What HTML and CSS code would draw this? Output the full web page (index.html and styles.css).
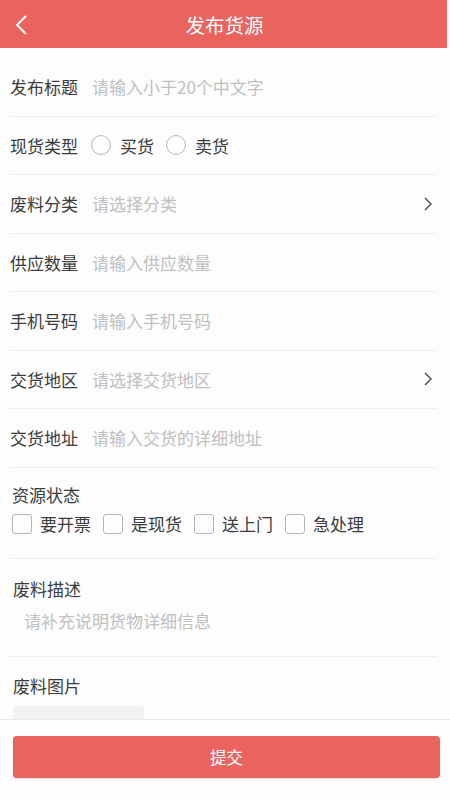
FILE: index.html
```html
<!DOCTYPE html>
<html lang="zh-CN">

<head>
    <meta charset="UTF-8">
    <meta name="viewport" content="width=device-width, initial-scale=1.0">
    <title>发布货源</title>
    <link rel="stylesheet" href="styles.css">
</head>

<body>
    <!-- Top bar -->
    <div class="top-bar">
        <svg class="back-icon" width="14" height="22" viewBox="0 0 14 22">
            <polyline points="12,2 3,11 12,20" fill="none" stroke="#fff" stroke-width="2" />
        </svg>
        <div class="top-title">发布货源</div>
    </div>

    <!-- Form -->
    <div class="form">
        <div class="form-row">
            <span class="row-label">发布标题</span>
            <span class="row-hint">请输入小于20个中文字</span>
        </div>
        <div class="form-row">
            <span class="row-label">现货类型</span>
            <span class="radio"></span><span class="option-text">买货</span>
            <span class="radio"></span><span class="option-text">卖货</span>
        </div>
        <div class="form-row">
            <span class="row-label">废料分类</span>
            <span class="row-hint">请选择分类</span>
            <svg class="arrow" width="10" height="16" viewBox="0 0 10 16">
                <polyline points="2,2 8,8 2,14" fill="none" stroke="#555" stroke-width="1.5" />
            </svg>
        </div>
        <div class="form-row">
            <span class="row-label">供应数量</span>
            <span class="row-hint">请输入供应数量</span>
        </div>
        <div class="form-row">
            <span class="row-label">手机号码</span>
            <span class="row-hint">请输入手机号码</span>
        </div>
        <div class="form-row">
            <span class="row-label">交货地区</span>
            <span class="row-hint">请选择交货地区</span>
            <svg class="arrow" width="10" height="16" viewBox="0 0 10 16">
                <polyline points="2,2 8,8 2,14" fill="none" stroke="#555" stroke-width="1.5" />
            </svg>
        </div>
        <div class="form-row">
            <span class="row-label">交货地址</span>
            <span class="row-hint">请输入交货的详细地址</span>
        </div>

        <!-- Status checkboxes -->
        <div class="form-block status-block">
            <div class="block-label">资源状态</div>
            <div class="check-list">
                <span class="check-box"></span><span class="check-text">要开票</span>
                <span class="check-box"></span><span class="check-text">是现货</span>
                <span class="check-box"></span><span class="check-text">送上门</span>
                <span class="check-box"></span><span class="check-text">急处理</span>
            </div>
        </div>

        <!-- Description -->
        <div class="form-block desc-block">
            <div class="block-label">废料描述</div>
            <div class="desc-hint">请补充说明货物详细信息</div>
        </div>

        <!-- Pictures -->
        <div class="pic-block">
            <div class="block-label">废料图片</div>
            <div class="pic-box"></div>
        </div>
    </div>

    <!-- Bottom submit bar -->
    <div class="bottom-bar">
        <button class="submit-btn">提交</button>
    </div>
</body>

</html>
```

FILE: styles.css
```css
/* Page */
body {
    margin: 0;
    padding: 0;
    background-color: #fdfdfd;
    font-family: "Noto Sans CJK SC", "Noto Sans", sans-serif;
    color: #3c3c3c;
    height: 800px;
    overflow: hidden;
    position: relative;
}

/* Top bar */
.top-bar {
    height: 48px;
    background-color: #e9635f;
    display: flex;
    align-items: center;
    justify-content: center;
    position: relative;
    margin-right: 3px;
}

.back-icon {
    position: absolute;
    left: 14px;
    top: 14px;
}

.top-title {
    color: #fff;
    font-size: 19.5px;
    margin-left: 2px;
}

/* Form */
.form {
    padding: 10px 13px 0 10px;
}

.form-row {
    height: 57.5px;
    border-bottom: 1px solid #eeeeee;
    display: flex;
    align-items: center;
    font-size: 17px;
}

.row-label {
    margin-right: 14px;
}

.row-hint {
    color: #c0c0c0;
    flex: 1;
}

.arrow {
    margin-right: 4px;
}

.radio {
    width: 18px;
    height: 18px;
    border: 1px solid #b5b5b5;
    border-radius: 50%;
    margin-right: 9px;
    margin-left: -1px;
}

.option-text {
    margin-right: 13px;
}

/* Blocks */
.form-block {
    border-bottom: 1px solid #eeeeee;
}

.block-label {
    font-size: 17px;
    line-height: 24px;
}

.status-block {
    padding: 15px 0 22px 2px;
}

.check-list {
    display: flex;
    align-items: center;
    margin-top: 5px;
    font-size: 17px;
    line-height: 24px;
}

.check-box {
    width: 18px;
    height: 18px;
    border: 1px solid #b5b5b5;
    border-radius: 3px;
    margin-right: 8px;
}

.check-text {
    margin-right: 12px;
}

.desc-block {
    padding: 18px 0 23px 3px;
}

.desc-hint {
    color: #c0c0c0;
    font-size: 17px;
    margin: 8px 0 0 11px;
    line-height: 24px;
}

.pic-block {
    padding: 17px 0 0 3px;
}

.pic-box {
    width: 131px;
    height: 60px;
    background-color: #f2f2f4;
    border-radius: 4px;
    margin-top: 8px;
}

/* Bottom bar */
.bottom-bar {
    position: absolute;
    left: 0;
    right: 0;
    bottom: 0;
    height: 81px;
    background-color: #fdfdfd;
    border-top: 1px solid #e8e8e8;
    padding: 16px 10px 0 13px;
    box-sizing: border-box;
}

.submit-btn {
    width: 100%;
    height: 42px;
    background-color: #e9635f;
    color: #fff;
    border: none;
    border-radius: 4px;
    font-family: "Noto Sans CJK SC", "Noto Sans", sans-serif;
    font-size: 16.5px;
    box-shadow: 0 1px 2px rgba(0, 0, 0, 0.15);
}
```
